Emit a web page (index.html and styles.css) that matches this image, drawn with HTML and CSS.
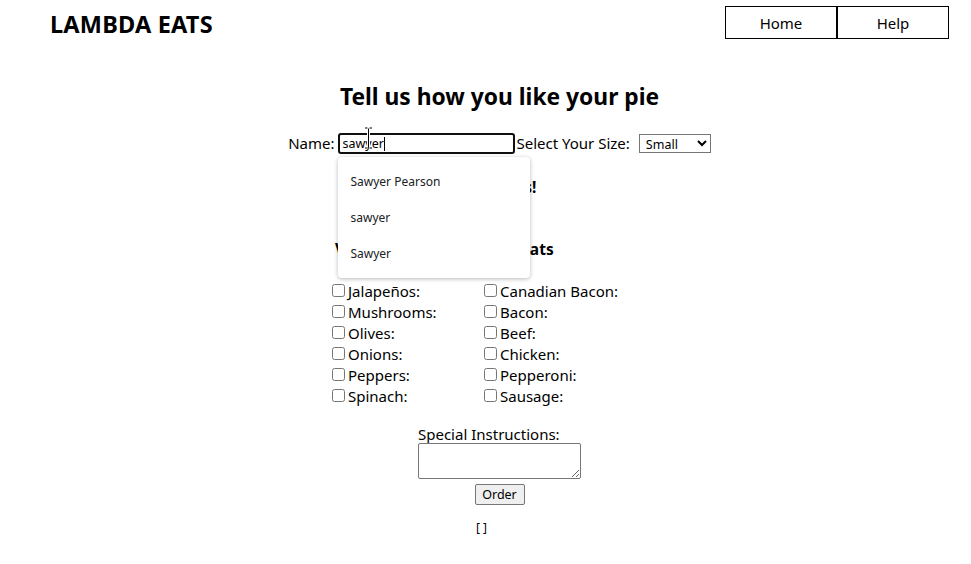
FILE: index.html
```html
<!DOCTYPE html>
<html lang="en">
<head>
<meta charset="utf-8">
<title>Lambda Eats</title>
<link rel="stylesheet" href="styles.css">
</head>
<body>
<header class="header">
  <div class="logo">LAMBDA EATS</div>
  <nav class="nav">
    <a class="nav-link" href="#">Home</a>
    <a class="nav-link" href="#">Help</a>
  </nav>
</header>
<main class="main">
  <h2 class="title">Tell us how you like your pie</h2>
  <form class="order-form">
    <div class="name-row">
      <label class="lbl" for="name">Name:</label>
      <span class="input-wrap">
        <input class="name-input" id="name" type="text" value="sawyer">
        <span class="caret"></span>
        <svg class="ibeam" width="9" height="22" viewBox="0 0 9 22"><path d="M1 1h2.5M5.5 1H8M4.5 1.5v19M1 21h2.5M5.5 21H8" stroke="#fff" stroke-width="3" fill="none"/><path d="M1 1h2.5M5.5 1H8M4.5 1.5v19M1 21h2.5M5.5 21H8" stroke="#000" stroke-width="1" fill="none"/></svg>
        <ul class="suggest">
          <li class="suggest-item">Sawyer Pearson</li>
          <li class="suggest-item">sawyer</li>
          <li class="suggest-item">Sawyer</li>
        </ul>
      </span>
      <label class="lbl size-lbl" for="size">Select Your Size:</label>
      <select class="size-select" id="size">
        <option>Small</option>
        <option>Medium</option>
        <option>Large</option>
      </select>
    </div>
    <h4 class="toppings">Toppings!</h4>
    <div class="columns">
      <div class="col col-left">
        <h4 class="col-head head-left">Veggies</h4>
        <label class="check"><input type="checkbox">Jalapeños:</label>
        <label class="check"><input type="checkbox">Mushrooms:</label>
        <label class="check"><input type="checkbox">Olives:</label>
        <label class="check"><input type="checkbox">Onions:</label>
        <label class="check"><input type="checkbox">Peppers:</label>
        <label class="check"><input type="checkbox">Spinach:</label>
      </div>
      <div class="col col-right">
        <h4 class="col-head head-right">Meats</h4>
        <label class="check"><input type="checkbox">Canadian Bacon:</label>
        <label class="check"><input type="checkbox">Bacon:</label>
        <label class="check"><input type="checkbox">Beef:</label>
        <label class="check"><input type="checkbox">Chicken:</label>
        <label class="check"><input type="checkbox">Pepperoni:</label>
        <label class="check"><input type="checkbox">Sausage:</label>
      </div>
    </div>
    <div class="special">
      <label class="special-lbl" for="special">Special Instructions:</label>
      <textarea class="special-text" id="special"></textarea>
    </div>
    <div class="btn-row"><button class="order-btn" type="button">Order</button></div>
  </form>
  <div class="output">[ ]</div>
</main>
</body>
</html>
```

FILE: styles.css
```css
* { box-sizing: border-box; }
html, body { margin: 0; padding: 0; background: #fff; }
body {
  font-family: "Noto Sans", "Open Sans", sans-serif;
  font-size: 16px;
  color: #000;
  overflow: hidden;
}
.header {
  display: flex;
  justify-content: space-between;
  align-items: flex-start;
  padding: 6px 22px 0 50px;
  height: 44px;
}
.logo {
  font-size: 23.5px;
  font-weight: 700;
  line-height: 36px;
  letter-spacing: 0.2px;
}
.nav { display: flex; }
.nav-link {
  display: flex;
  align-items: center;
  justify-content: center;
  width: 112px;
  height: 33px;
  border: 1px solid #000;
  color: #000;
  text-decoration: none;
  font-size: 15px;
  padding-top: 1px;
}
.main {
  padding-left: 28px;
  text-align: center;
}
.title {
  margin: 37px 0 0;
  font-size: 22.8px;
  line-height: 32px;
  font-weight: 700;
}
.name-row {
  display: flex;
  justify-content: center;
  align-items: center;
  height: 22px;
  margin-top: 19px;
  font-size: 15px;
}
.lbl { line-height: 22px; }
.input-wrap {
  position: relative;
  display: inline-block;
  margin-left: 4px;
  height: 21px;
}
.name-input {
  display: block;
  width: 177px;
  height: 21px;
  margin: 0;
  border: 2px solid #101010;
  border-radius: 3px;
  padding: 0 2px;
  font-family: "Noto Sans", sans-serif;
  font-size: 12.5px;
  color: #000;
  outline: none;
}
.caret {
  position: absolute;
  left: 46px;
  top: 4px;
  width: 1px;
  height: 14px;
  background: #000;
}
.ibeam {
  position: absolute;
  left: 26px;
  top: -6px;
}
.suggest {
  position: absolute;
  left: 0;
  top: 24px;
  width: 192px;
  height: 121px;
  margin: 0;
  padding: 7px 0 0;
  list-style: none;
  background: #fff;
  border-radius: 4px;
  box-shadow: 0 1px 4px rgba(0, 0, 0, 0.28);
  text-align: left;
  z-index: 10;
}
.suggest-item {
  height: 36px;
  line-height: 36px;
  padding-left: 12px;
  font-size: 12px;
  color: #202124;
}
.size-lbl { margin-left: 1px; }
.size-select {
  margin-left: 9px;
  width: 72px;
  height: 19px;
  font-family: "Noto Sans", sans-serif;
  font-size: 12.5px;
  padding: 0 2px;
  border: 1px solid #767676;
  border-radius: 0;
  background: #fff;
  color: #000;
}
.toppings {
  margin: 22px 0 0;
  font-size: 15.5px;
  line-height: 22px;
  font-weight: 700;
}
.columns {
  display: flex;
  justify-content: center;
  margin-top: 40px;
  text-align: left;
}
.col { display: flex; flex-direction: column; }
.col-left { width: 152px; }
.col-right { width: 183px; }
.col-head {
  margin: 0 0 20px;
  font-size: 15.5px;
  line-height: 22px;
  font-weight: 700;
}
.head-left { padding-left: 3px; }
.head-right { padding-left: 22px; }
.check {
  display: flex;
  align-items: center;
  height: 21px;
  font-size: 15px;
}
.check input {
  width: 13px;
  height: 13px;
  margin: 0 3px 0 0;
}
.special {
  display: inline-flex;
  flex-direction: column;
  width: 163px;
  margin-top: 19px;
  text-align: left;
}
.special-lbl {
  font-size: 15px;
  line-height: 18px;
}
.special-text {
  width: 163px;
  height: 36px;
  margin: 0;
  border: 1px solid #767676;
  border-radius: 2px;
  resize: both;
}
.btn-row { margin-top: 3px; }
.order-btn {
  width: 50px;
  height: 21px;
  padding: 0;
  font-family: "Noto Sans", sans-serif;
  font-size: 12.5px;
  background: #efefef;
  border: 1px solid #767676;
  border-radius: 2px;
  color: #000;
}
.output {
  margin-top: 15px;
  padding-right: 36px;
  font-size: 12px;
  line-height: 16px;
}
```
